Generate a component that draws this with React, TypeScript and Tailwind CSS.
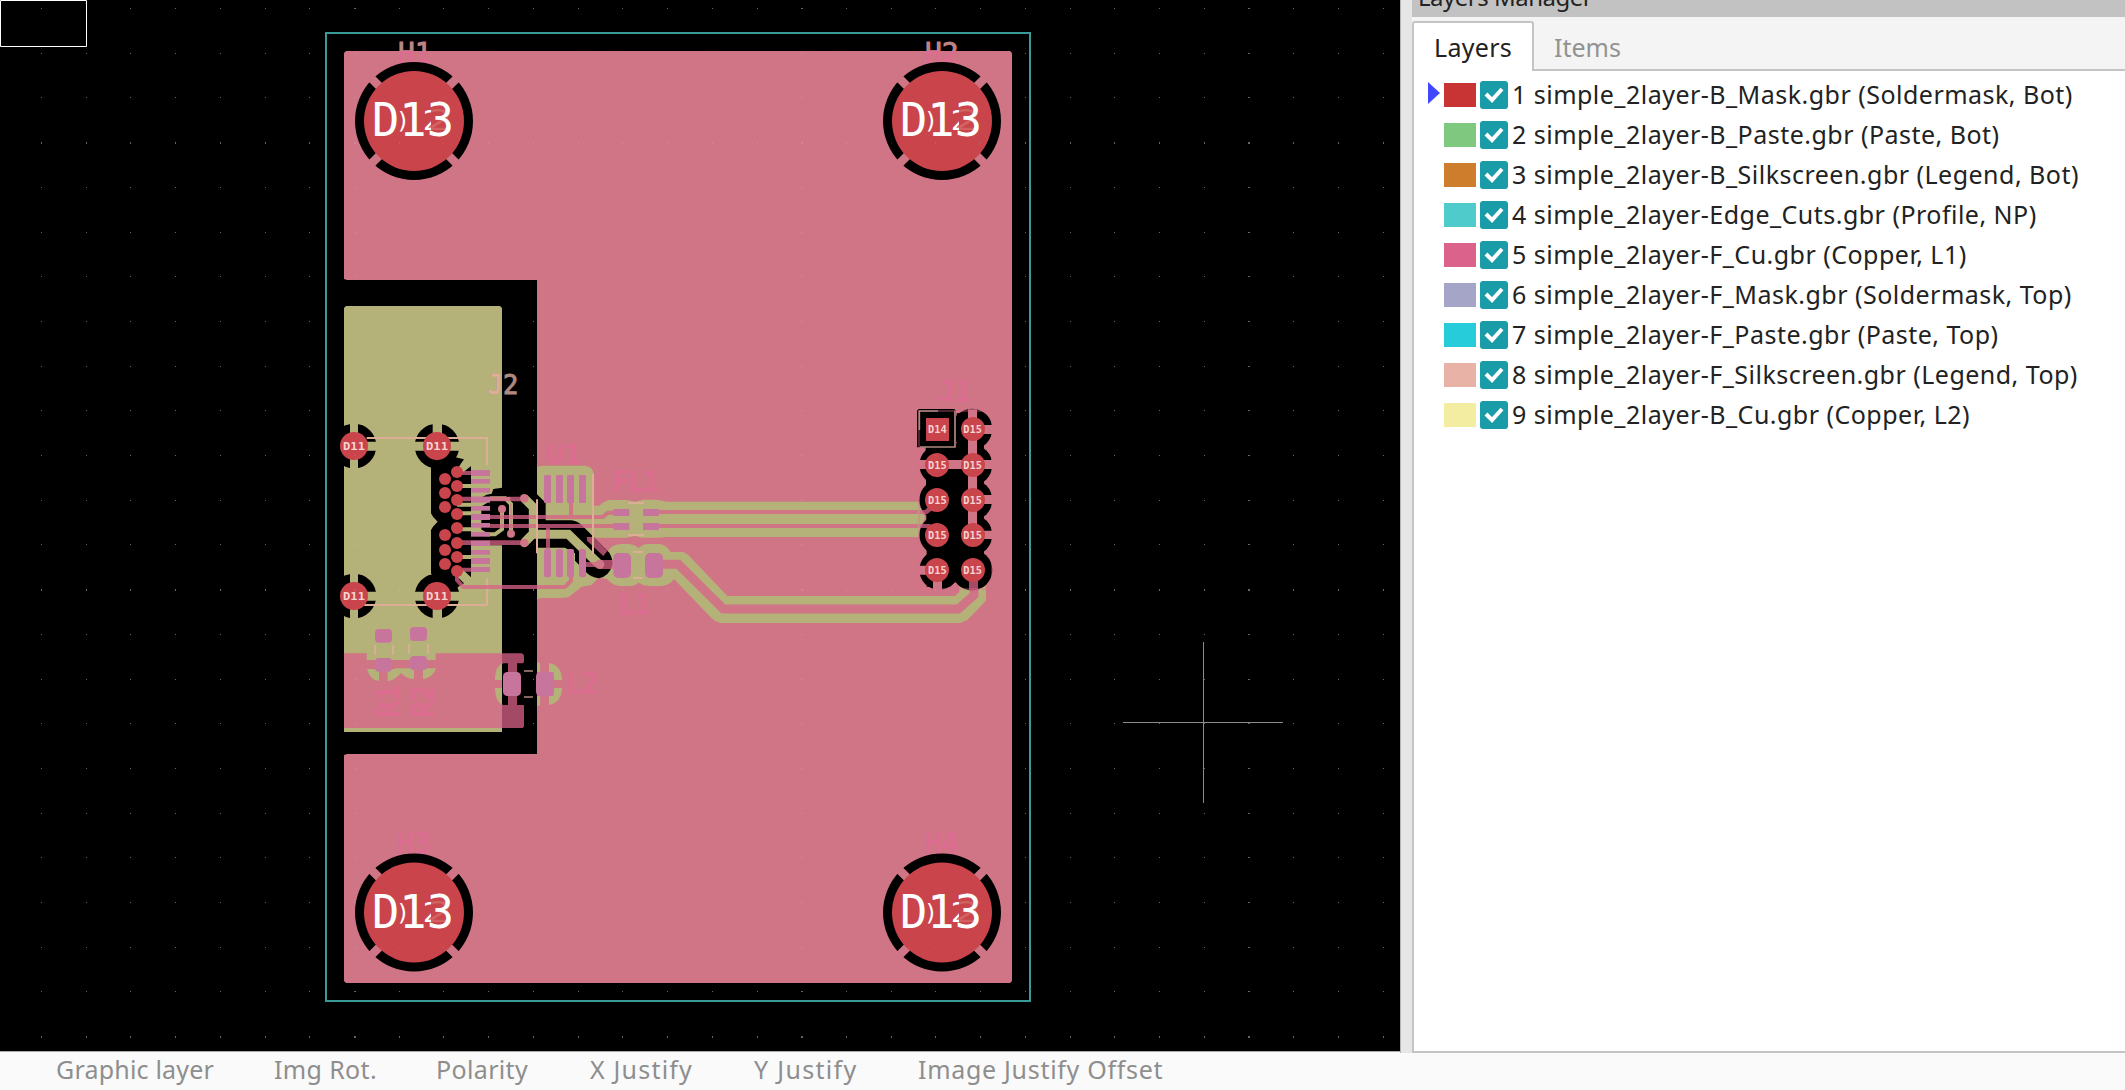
import React from "react";

const PINK = "#d07585";
const OLIVE = "#b5b279";
const CU = "#d96186";
const RED = "#c9444b";
const MASK = "#c8759d";
const SILK = "#ddae96";
const FAINT = "#dd6c91";
const MONO = "'DejaVu Sans Mono', monospace";

const layers = [
  { n: 1, name: "simple_2layer-B_Mask.gbr (Soldermask, Bot)", color: "bg-[#c83434]" },
  { n: 2, name: "simple_2layer-B_Paste.gbr (Paste, Bot)", color: "bg-[#7fc87f]" },
  { n: 3, name: "simple_2layer-B_Silkscreen.gbr (Legend, Bot)", color: "bg-[#ce7d2c]" },
  { n: 4, name: "simple_2layer-Edge_Cuts.gbr (Profile, NP)", color: "bg-[#50cbcb]" },
  { n: 5, name: "simple_2layer-F_Cu.gbr (Copper, L1)", color: "bg-[#db628b]" },
  { n: 6, name: "simple_2layer-F_Mask.gbr (Soldermask, Top)", color: "bg-[#a5a5c8]" },
  { n: 7, name: "simple_2layer-F_Paste.gbr (Paste, Top)", color: "bg-[#26ccda]" },
  { n: 8, name: "simple_2layer-F_Silkscreen.gbr (Legend, Top)", color: "bg-[#e8b2a7]" },
  { n: 9, name: "simple_2layer-B_Cu.gbr (Copper, L2)", color: "bg-[#f2eda1]" },
];

const status = [
  { label: "Graphic layer", cls: "w-[218px] tracking-[0.2px]" },
  { label: "Img Rot.", cls: "w-[162px] tracking-[0.35px]" },
  { label: "Polarity", cls: "w-[154px] tracking-[0.35px]" },
  { label: "X Justify", cls: "w-[164px] tracking-[1.2px]" },
  { label: "Y Justify", cls: "w-[164px] tracking-[1.3px]" },
  { label: "Image Justify Offset", cls: "w-[300px] tracking-[0.7px]" },
];

function Grid({ opacity }: { opacity: number }) {
  const dots: React.ReactNode[] = [];
  for (let i = 0; i < 31; i++) {
    for (let j = 0; j < 24; j++) {
      const bigX = i % 10 === 7;
      const bigY = j % 10 === 3;
      dots.push(
        <rect
          key={i + "-" + j}
          x={Math.round(41 + 44.72 * i)}
          y={Math.round(8 + 44.7 * j)}
          width={bigX ? 2 : 1}
          height={bigY ? 2 : 1}
        />,
      );
    }
  }
  return <g fill="#fff" opacity={opacity} shapeRendering="crispEdges">{dots}</g>;
}

function Hole({ x, y }: { x: number; y: number }) {
  return (
    <g transform={`translate(${x} ${y})`}>
      <circle r="59" fill="#000" />
      <path d="M-45 -45L45 45M45 -45L-45 45" stroke={PINK} strokeWidth="8.5" />
      <circle r="50" fill={RED} />
      <g fontFamily={MONO} fill="#fff">
        <text x="11" y="9" fontSize="28" fill="#d1625f" textLength="28" lengthAdjust="spacingAndGlyphs">2</text>
        <text x="-18" y="8" fontSize="23">)</text>
        <g clipPath="url(#two)"><text x="9" y="9" fontSize="27">2</text></g>
        <text x="-42" y="15" fontSize="47" textLength="82" lengthAdjust="spacingAndGlyphs">D13</text>
      </g>
    </g>
  );
}

function PadText({ x, y, t, w = 66 }: { x: number; y: number; t: string; w?: number }) {
  return (
    <text x={x - w / 2} y={y + 12} fontSize="34" fontWeight="bold" fontFamily={MONO} fill="#f6d3d0" textLength={w} lengthAdjust="spacingAndGlyphs">
      {t}
    </text>
  );
}

function Silk({ x, y, t, w, fill = FAINT, size = 80 }: { x: number; y: number; t: string; w: number; fill?: string; size?: number }) {
  return (
    <text x={x} y={y} fontSize={size} fontFamily={MONO} fill={fill} stroke={fill} strokeWidth="3" textLength={w} lengthAdjust="spacingAndGlyphs">
      {t}
    </text>
  );
}

const viaRows: [number, number][] = [
  [411, 336], [411, 378], [411, 420], [411, 462], [411, 504], [411, 549], [411, 591], [411, 633],
  [375, 357], [375, 399], [375, 441], [375, 525], [375, 570], [375, 612],
];
const usbPads: [number, number][] = [
  [330, 18], [357, 14], [384, 14], [410, 18], [438, 14], [462, 18], [489, 14], [516, 14], [542, 16], [570, 14], [594, 18], [621, 15],
];
const u1x = [672, 708, 741, 777];

/* Connector, ESD array, filter and inductor L1, in thirds of a pixel */
function Circuit() {
  return (
    <g transform="translate(320 360) scale(0.33333333)">
      {/* clearances in the front copper */}
      <path
        fill={OLIVE}
        d="M651 320L668 317H795Q820 320 822 345V437H838Q852 422 872 420H920L945 425L970 419H1010L1040 425H1795V531H1040L1010 533H965L945 528L920 533H803L870 598L862 575Q875 552 905 552H925Q945 553 955 565Q968 552 985 552H1020Q1040 555 1052 576H1090L1105 585L1222 708H1905L1918 696V680H1998V722L1942 780L1920 789H1200Q1185 785 1175 775L1062 657Q1050 677 1020 678H985Q970 678 955 668Q945 678 925 678H900Q875 675 862 657L835 653L815 675L785 680L745 712L720 714H665L651 717Z"
      />
      {/* clearances common to both copper layers */}
      <path
        fill="#000"
        d="M342 300L400 290L432 298L422 312L416 322L428 338L453 318V652L430 630L412 650L432 670L400 690H350L340 650L333 640V510L339 500L353 485L339 470L333 460V320ZM485 412Q500 401 515 401L520 387L546 383V556H450V520H490L484 510V430Z"
      />
      <path
        fill="#000"
        d="M546 383H630L651 403L677 428V481H755Q775 485 785 495L868 578Q880 600 877 615Q868 648 837 655Q812 653 795 633L765 602V580L735 563H651V565H546Z"
      />
      <g fill="none" stroke={OLIVE} strokeWidth="12">
        <path d="M411 378H470M411 434H470L484 432L513 415H556L573 432V520M411 460H470M411 508H470L497 523H525L546 508V447M411 591H470M428 460H455" />
      </g>
      <g fill="none" stroke={OLIVE} strokeWidth="27">
        <path d="M613 415L640 442V520L613 548M640 523H745L837 613" />
      </g>
      {/* connector shield pads */}
      <clipPath id="edge"><rect x="72" y="0" width="800" height="1000" /></clipPath>
      <g clipPath="url(#edge)" fill="#000">
        {[[102, 258], [351, 258], [102, 708], [351, 708]].map(([x, y]) => <circle key={x + "," + y} cx={x} cy={y} r="67" />)}
      </g>
      <path
        fill={OLIVE}
        d="M90 188H114V328H90ZM102 245H172V272H102ZM338 188H366V258H338ZM282 245H351V272H282ZM351 245H420V272H351ZM90 638H114V778H90ZM102 695H172V722H102ZM338 708H366V778H338ZM282 695H420V722H282Z"
      />
      <path d="M140 234H501V315M501 655V735H130" fill="none" stroke={SILK} strokeWidth="6" />
      {/* front copper tracks */}
      <g fill="none" stroke={CU} strokeOpacity="0.76" strokeWidth="12">
        <path d="M510 471H848L864 458H885M411 339H453M411 629H453M753 429V465M684 504V567M411 645V660L430 681H735L753 662V650" />
        <path d="M510 498H880" />
        <path d="M411 417H613M411 548H613" strokeWidth="14" />
      </g>
      <path d="M798 606H828V621H798ZM840 600H880V627H840ZM800 531H821L862 573L850 588L802 543Z" fill={CU} fillOpacity="0.76" />
      <g fill="none" stroke={PINK} strokeWidth="12">
        <path d="M1017 456H1795M1017 498H1795" />
        <path d="M1028 613H1075L1210 747H1915L1962 705V680" strokeWidth="27" />
      </g>
      <g fill={PINK}>
        <circle cx="613" cy="415" r="13" /><circle cx="613" cy="549" r="13" />
        <circle cx="546" cy="447" r="12" /><circle cx="573" cy="521" r="12" />
        <circle cx="839" cy="613" r="14" />
        <rect x="513" y="411" width="58" height="11" />
      </g>
      <path d="M546 460V505M573 432V508" stroke={PINK} strokeOpacity="0.75" strokeWidth="4" />
      <g fill={RED}>
        {viaRows.map(([x, y]) => <circle key={x + "," + y} cx={x} cy={y} r="18" />)}
        {[[102, 258], [351, 258], [102, 708], [351, 708]].map(([x, y]) => <circle key={x + "," + y} cx={x} cy={y} r="42" />)}
      </g>
      <g fill={MASK}>
        {usbPads.map(([y, h]) => <rect key={y} x="453" y={y} width="57" height={h} />)}
        {u1x.map((x) => <rect key={x} x={x} y="345" width="21" height="84" rx="3" />)}
        {u1x.map((x) => <rect key={x} x={x} y="567" width="21" height="85" rx="6" />)}
        {[880, 969].map((x) => [447, 489].map((y) => <rect key={x + "," + y} x={x} y={y} width="48" height="21" />))}
        <rect x="880" y="579" width="53" height="75" rx="15" />
        <rect x="975" y="579" width="54" height="75" rx="15" />
      </g>
      <path d="M819 342V582M651 418V580M924 429H972M924 525H972M939 576H969M939 654H969" fill="none" stroke={SILK} strokeWidth="6" />
      <PadText x={102} y={258} t="D11" /><PadText x={351} y={258} t="D11" />
      <PadText x={102} y={708} t="D11" /><PadText x={351} y={708} t="D11" />
      <clipPath id="onOlive"><rect x="400" y="0" width="146" height="200" /></clipPath>
      <Silk x={503} y={101} t="J2" w={92} fill="#b08a80" />
      <g clipPath="url(#onOlive)"><Silk x={503} y={101} t="J2" w={92} fill={SILK} /></g>
      <Silk x={681} y={309} t="U1" w={100} size={75} />
      <Silk x={880} y={393} t="FL1" w={136} />
      <Silk x={900} y={762} t="L1" w={88} />
    </g>
  );
}

/* Resistors R1, R2 and inductor L2 */
function Lower() {
  return (
    <g transform="translate(320 600) scale(0.33333333)">
      <path d="M72 160H140V180H347V160H546V384H72Z" fill={PINK} />
      <path d="M141 207Q150 240 177 243H205Q225 240 243 219Q260 237 282 237H310Q340 232 348 205H225V207Z" fill={OLIVE} />
      <path d="M177 200H203V245H177ZM282 200H309V239H282Z" fill={PINK} />
      <path d="M546 160H606L612 166V186L608 190H591V315H612V380L608 384H546V315H564V190H546Z" fill={CU} fillOpacity="0.76" />
      <path d="M549 189Q525 198 525 240H546V189ZM549 315Q525 306 525 264H546V315ZM651 186L660 190V216H651ZM651 320L660 315V288H651ZM687 189Q724 195 726 240H700V216H687ZM687 315Q724 308 726 264H700V288H687Z" fill={OLIVE} />
      <g fill={MASK}>
        <rect x="165" y="87" width="51" height="41" rx="11" />
        <rect x="270" y="81" width="51" height="42" rx="11" />
        <rect x="165" y="174" width="51" height="41" rx="11" />
        <rect x="270" y="168" width="51" height="42" rx="11" />
        <rect x="549" y="216" width="54" height="72" rx="13" />
        <rect x="648" y="216" width="54" height="72" rx="13" />
      </g>
      <path d="M165 135V165M219 135V165M267 132V161M324 132V161" stroke={SILK} strokeWidth="5" />
      <path d="M612 213H639M612 291H639" stroke="#b08a80" strokeWidth="5" />
      <g transform="translate(235 352) rotate(-90)"><Silk x={0} y={0} t="R1" w={96} size={86} /></g>
      <g transform="translate(340 352) rotate(-90)"><Silk x={0} y={0} t="R2" w={96} size={86} /></g>
      <Silk x={740} y={279} t="L2" w={92} size={84} />
    </g>
  );
}

const headerRows = [177, 285, 390, 495, 600];

function Header() {
  return (
    <g transform="translate(860 370) scale(0.33333333)">
      <path fill={OLIVE} d="M174 395L180 410L195 443L180 475L174 501Z" />
      <g fill="#000">
        <path d="M171 122L176 117H283L288 122V232H171Z" />
        {headerRows.slice(1).map((y) => <circle key={y} cx="237" cy={y} r="59" />)}
        {headerRows.map((y) => <circle key={y} cx="336" cy={y} r="61" />)}
        <path d="M197 220H290V130L300 130H372V640H300L285 637L270 650H200V560Z" />
      </g>
      <path fill={OLIVE} d="M176 412L195 443L176 474Z" />
      <path fill={PINK} d="M324 118H351V495H324ZM345 165H400V192H345ZM170 270H400V297H170ZM345 375H400V402H345ZM345 482H400V507H345ZM170 587H231V614H170ZM219 600H246V660H219ZM375 231L394 208V254ZM375 336L394 313V359ZM375 442L394 419V465ZM375 547L394 524V570ZM195 336L176 315V357ZM195 547L176 526V568Z" />
      <path fill={CU} fillOpacity="0.76" d="M327 600H354V662H327ZM178 420H195L215 400L225 414L202 432H178ZM178 462H210L225 474H178Z" />
      <rect x="177" y="123" width="219" height="534" fill="none" stroke={FAINT} strokeWidth="4" strokeOpacity="0.5" />
      <path d="M178 180V123H234M285 122V231H180" fill="none" stroke="#b08a80" strokeWidth="5" />
      <g fill={RED}>
        <rect x="198" y="144" width="69" height="69" />
        {headerRows.slice(1).map((y) => <circle key={y} cx="231" cy={y} r="36" />)}
        {headerRows.map((y) => <circle key={y} cx="339" cy={y} r="36" />)}
      </g>
      {headerRows.map((y, i) => (
        <g key={y}>
          <PadText x={232} y={y} t={i === 0 ? "D14" : "D15"} w={56} />
          <PadText x={338} y={y} t="D15" w={56} />
        </g>
      ))}
      <Silk x={239} y={94} t="J1" w={92} />
    </g>
  );
}

function Board() {
  return (
    <svg width="1400" height="1051" viewBox="0 0 1400 1051" className="block">
      <defs>
        <clipPath id="two"><rect x="0" y="-20" width="17" height="50" /></clipPath>
        <clipPath id="above"><rect x="340" y="30" width="700" height="21" /></clipPath>
      </defs>
      <Grid opacity={0.33} />
      <path d="M0.5 0.5H86.5V46.5H0.5Z" fill="none" stroke="#fff" />
      <rect x="326" y="33" width="704" height="968" fill="none" stroke="#3a9a98" strokeWidth="2" />
      <path fill={PINK} d="M346 51H1010L1012 53V981L1010 983H346L344 981V755L347 754H537V280H347L344 279V53Z" />
      <path fill={OLIVE} d="M346 306H500L502 308V732H344V308Z" />
      <g fontFamily={MONO} fontSize="28">
        {([["H1", 398, 63], ["H2", 925, 63], ["H3", 397, 853], ["H4", 925, 853]] as [string, number, number][]).map(([t, x, y]) => (
          <g key={t}>
            <text x={x} y={y} fill={FAINT} stroke={FAINT} strokeWidth="0.8">{t}</text>
            {y < 100 && <g clipPath="url(#above)"><text x={x} y={y} fill="#b08a80">{t}</text></g>}
          </g>
        ))}
      </g>
      <Hole x={414} y={121} />
      <Hole x={942} y={121} />
      <Hole x={414} y={912.5} />
      <Hole x={942} y={912.5} />
      <Circuit />
      <Lower />
      <Header />
      <Grid opacity={0.1} />
      <path d="M1203.5 642V803M1123 722.5H1283" stroke="#8a8a8a" strokeWidth="1" fill="none" />
    </svg>
  );
}

export default function App() {
  return (
    <div className="flex h-[1090px] w-[2125px] flex-col overflow-hidden bg-[#fafafa] font-['Noto_Sans',sans-serif] text-[25px] text-[#222]">
      <div className="flex h-[1053px]">
        <div className="h-[1052px] w-[1400px] shrink-0 overflow-hidden border-b border-[#a8a8a8] bg-black"><Board /></div>
        <div className="w-3 shrink-0 border-l border-[#b4b4b4] bg-[#e6e6e6]" />
        <aside className="flex min-w-0 flex-1 flex-col bg-[#f4f4f4]">
          <div className="flex h-[17px] shrink-0 items-end bg-[#c2c2c2] pl-[6px]">
            <span className="mb-2 block whitespace-nowrap text-[24px] leading-[24px] tracking-[-0.5px]">Layers Manager</span>
          </div>
          <div className="mt-1 flex h-[50px] shrink-0">
            <div className="w-[122px] rounded-t-[3px] border-2 border-b-0 border-[#c4c4c4] bg-white pl-5 leading-[48px] tracking-[0.3px]">Layers</div>
            <div className="flex-1 border-b-2 border-[#c4c4c4] pl-5 leading-[52px] text-[#929292]">Items</div>
          </div>
          <div className="flex-1 border-b-2 border-l-2 border-[#c4c4c4] bg-white pt-1">
            {layers.map((l) => (
              <div key={l.n} className="flex h-10 items-center pl-[14px]">
                <div className="w-4">
                  {l.n === 1 && <svg width="12" height="24" viewBox="0 0 12 24" className="-mt-1"><path d="M0 1L12 12L0 23Z" fill="#4048ff" /></svg>}
                </div>
                <div className={"h-6 w-8 " + l.color} />
                <div className="ml-1 flex h-7 w-7 items-center justify-center rounded-[3px] bg-[#1a9ba8]">
                  <svg width="20" height="16" viewBox="0 0 20 16"><path d="M2 7L8 13L18 2" fill="none" stroke="#fff" strokeWidth="4" /></svg>
                </div>
                <span className="ml-1 whitespace-nowrap tracking-[0.48px]">{l.n} {l.name}</span>
              </div>
            ))}
          </div>
        </aside>
      </div>
      <footer className="flex h-[37px] pl-14 leading-[33px] text-[#8e8e8e]">
        {status.map((s) => (
          <span key={s.label} className={"shrink-0 whitespace-nowrap " + s.cls}>{s.label}</span>
        ))}
      </footer>
    </div>
  );
}
